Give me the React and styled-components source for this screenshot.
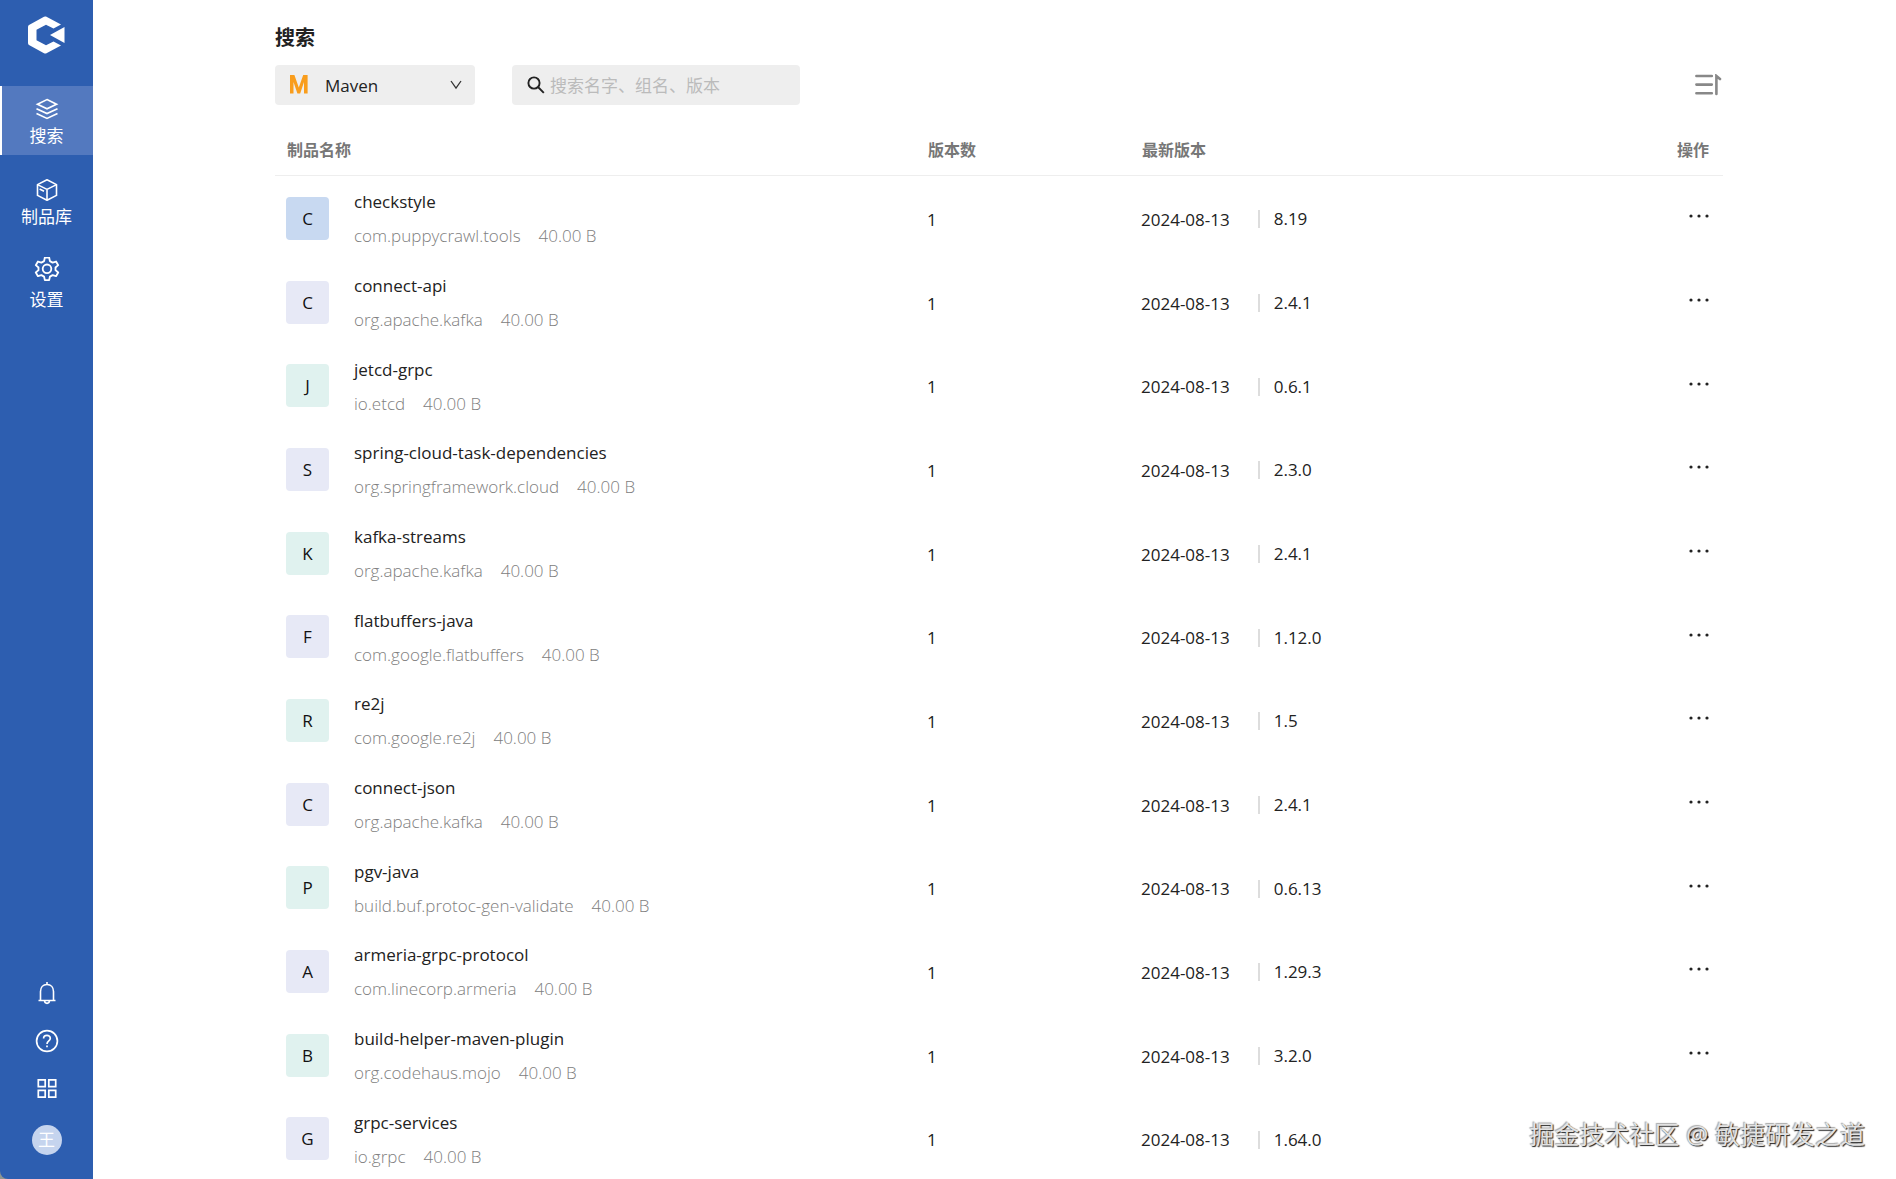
import React from 'react';
import styled, { createGlobalStyle } from 'styled-components';

const GlobalStyle = createGlobalStyle`
  * {
    box-sizing: border-box;
  }

  body {
    margin: 0;
    background: #fff;
    color: #222;
    font-family: 'Open Sans', 'Noto Sans CJK SC', sans-serif;
    font-size: 17px;
    font-weight: 400;
  }

  button,
  input,
  select {
    font: inherit;
    color: inherit;
  }
`;

const packages = [
  { name: 'checkstyle', group: 'com.puppycrawl.tools', version: '8.19', tone: '#c8d9f1' },
  { name: 'connect-api', group: 'org.apache.kafka', version: '2.4.1', tone: '#e7e9f6' },
  { name: 'jetcd-grpc', group: 'io.etcd', version: '0.6.1', tone: '#e0f2ef' },
  { name: 'spring-cloud-task-dependencies', group: 'org.springframework.cloud', version: '2.3.0', tone: '#e7e9f6' },
  { name: 'kafka-streams', group: 'org.apache.kafka', version: '2.4.1', tone: '#e0f2ef' },
  { name: 'flatbuffers-java', group: 'com.google.flatbuffers', version: '1.12.0', tone: '#e7e9f6' },
  { name: 're2j', group: 'com.google.re2j', version: '1.5', tone: '#e0f2ef' },
  { name: 'connect-json', group: 'org.apache.kafka', version: '2.4.1', tone: '#e7e9f6' },
  { name: 'pgv-java', group: 'build.buf.protoc-gen-validate', version: '0.6.13', tone: '#e0f2ef' },
  { name: 'armeria-grpc-protocol', group: 'com.linecorp.armeria', version: '1.29.3', tone: '#e7e9f6' },
  { name: 'build-helper-maven-plugin', group: 'org.codehaus.mojo', version: '3.2.0', tone: '#e0f2ef' },
  { name: 'grpc-services', group: 'io.grpc', version: '1.64.0', tone: '#e7e9f6' },
];

const Logo = () => (
  <svg width="38" height="38" viewBox="0 0 38 38" fill="#fff">
    <path d="M19 0.5 L34 8.5 L26.5 12.5 L19 8.8 L9.5 13.8 V24.2 L19 29.2 L26.5 25.5 L34 29.5 L19 37.5 Q18 37.8 17 37.2 L2 29 Q1 28.4 1 27 V11 Q1 9.6 2 9 L17 0.8 Q18 0.2 19 0.5 Z" />
    <path d="M37.5 11 V27 L23 19 Z" />
  </svg>
);

const LayersIcon = () => (
  <svg width="24" height="24" viewBox="0 0 24 24" fill="none" stroke="#fff" strokeWidth="1.7">
    <path d="M12 2.6 L21.5 7.2 L12 11.8 L2.5 7.2 Z" />
    <path d="M1.5 11.8 L12 16.6 L22.5 11.8" />
    <path d="M1.5 16.6 L12 21.4 L22.5 16.6" />
  </svg>
);

const BoxIcon = () => (
  <svg width="24" height="24" viewBox="0 0 24 24" fill="none" stroke="#fff" strokeWidth="1.6" strokeLinejoin="round">
    <path d="M12 1.8 L21.5 6.6 V17.4 L12 22.2 L2.5 17.4 V6.6 Z" />
    <path d="M2.5 6.6 L12 11.4 L21.5 6.6 M12 11.4 V22.2 M4.6 11 L9 13.2" />
  </svg>
);

const GearIcon = () => (
  <svg width="26" height="28" viewBox="0 1 24 26" fill="none" stroke="#fff" strokeWidth="1.7" strokeLinejoin="round">
    <circle cx="12" cy="12" r="4" />
    <path d="M10 1.5 H14 L14.7 4.8 L17.2 6.2 L20.4 5.2 L22.4 8.6 L19.9 10.8 V13.2 L22.4 15.4 L20.4 18.8 L17.2 17.8 L14.7 19.2 L14 22.5 H10 L9.3 19.2 L6.8 17.8 L3.6 18.8 L1.6 15.4 L4.1 13.2 V10.8 L1.6 8.6 L3.6 5.2 L6.8 6.2 L9.3 4.8 Z" />
  </svg>
);

const BellIcon = () => (
  <svg width="24" height="24" viewBox="0 0 24 24" fill="none" stroke="#fff" strokeWidth="1.6">
    <path d="M3.5 19.5 H20.5 M5.5 19.5 V10.5 C5.5 6.5 8 3.5 12 3.5 C16 3.5 18.5 6.5 18.5 10.5 V19.5 M12 1 V3.5 M9.5 19.8 C9.8 23.2 14.2 23.2 14.5 19.8" />
  </svg>
);

const HelpIcon = () => (
  <svg width="24" height="24" viewBox="0 0 24 24" fill="none" stroke="#fff" strokeWidth="1.7">
    <circle cx="12" cy="12" r="10.4" />
    <path d="M8.6 9.6 C8.6 5.2 15.4 5.4 15.3 9.4 C15.2 11.8 12 11.9 12 14.9 M12 16.6 V18.3" />
  </svg>
);

const GridIcon = () => (
  <svg width="24" height="24" viewBox="0 0 24 24" fill="none" stroke="#fff" strokeWidth="1.7">
    <path d="M3.3 2.8 H10.2 V9.7 H3.3 Z M13.8 2.8 H20.7 V9.7 H13.8 Z M3.3 13.3 H10.2 V20.2 H3.3 Z M13.8 13.3 H20.7 V20.2 H13.8 Z" />
  </svg>
);

const MavenIcon = () => (
  <svg width="19" height="20" viewBox="0 0 19 20" fill="#f99d1c">
    <path d="M1 18.5 V0 H5.4 L9.8 12.5 L14.2 0 H18.6 V18.5 H15 V7 L11.2 18.5 H8.4 L4.5 7 V18.5 Z" />
  </svg>
);

const ChevronIcon = () => (
  <svg width="12" height="10" viewBox="0 0 12 10" fill="none" stroke="#333" strokeWidth="1.3">
    <path d="M1 1 L6 8.2 L11 1" />
  </svg>
);

const SearchIcon = () => (
  <svg width="18" height="18" viewBox="0 0 18 18" fill="none" stroke="#222" strokeWidth="1.9">
    <circle cx="7" cy="7" r="5.6" />
    <path d="M11 11 L16.8 16.8" />
  </svg>
);

const SortIcon = () => (
  <svg width="28" height="22" viewBox="0 0 28 22" fill="none" stroke="#888" strokeWidth="2.6" strokeLinecap="round">
    <path d="M1.4 2 H16.8 M1.4 10.6 H16.8 M1.4 19.2 H16.8" />
    <path d="M21.4 20 V2 L25 5" />
  </svg>
);

const DotsIcon = () => (
  <svg width="20" height="4" viewBox="0 0 20 4" fill="#222">
    <circle cx="2" cy="2" r="1.6" />
    <circle cx="10" cy="2" r="1.6" />
    <circle cx="18" cy="2" r="1.6" />
  </svg>
);

const App = () => {
  return (
    <Page>
      <GlobalStyle />
      <Sidebar>
        <LogoLink href="#" aria-label="首页"><Logo /></LogoLink>
        <Nav>
          <NavItem href="#search" $active><LayersIcon />搜索</NavItem>
          <NavItem href="#repository"><BoxIcon />制品库</NavItem>
          <NavItem href="#setting"><GearIcon />设置</NavItem>
        </Nav>
        <SideTools>
          <IconButton aria-label="消息"><BellIcon /></IconButton>
          <IconButton aria-label="帮助"><HelpIcon /></IconButton>
          <IconButton aria-label="应用"><GridIcon /></IconButton>
          <Avatar>王</Avatar>
        </SideTools>
      </Sidebar>
      <Main>
        <Title>搜索</Title>
        <Toolbar>
          <SelectBox>
            <MavenIcon />
            <select aria-label="制品类型" defaultValue="Maven">
              <option>Maven</option>
              <option>Npm</option>
              <option>Docker</option>
            </select>
            <ChevronIcon />
          </SelectBox>
          <SearchBox>
            <SearchIcon />
            <input type="text" aria-label="搜索" placeholder="搜索名字、组名、版本" />
          </SearchBox>
          <SortButton aria-label="排序"><SortIcon /></SortButton>
        </Toolbar>
        <Table>
          <thead>
            <tr>
              <HeadCell>制品名称</HeadCell>
              <HeadCell $width="214px">版本数</HeadCell>
              <HeadCell $width="453px">最新版本</HeadCell>
              <HeadCell $width="140px" $right>操作</HeadCell>
            </tr>
          </thead>
          <tbody>
            {packages.map((item) => (
              <Row key={item.name}>
                <Cell>
                  <Package>
                    <Tile $tone={item.tone}>{item.name[0].toUpperCase()}</Tile>
                    <div>
                      <Name>{item.name}</Name>
                      <Meta><span>{item.group}</span><span>40.00 B</span></Meta>
                    </div>
                  </Package>
                </Cell>
                <Cell>1</Cell>
                <Cell>
                  <Latest><span>2024-08-13</span><Version>{item.version}</Version></Latest>
                </Cell>
                <Cell>
                  <MoreButton aria-label="更多操作"><DotsIcon /></MoreButton>
                </Cell>
              </Row>
            ))}
          </tbody>
        </Table>
      </Main>
      <Watermark>掘金技术社区 @ 敏捷研发之道</Watermark>
    </Page>
  );
};

const Page = styled.div`
  position: relative;
  display: flex;
  height: 100vh;
  overflow: hidden;
  background: #8f9691;
`;

const Sidebar = styled.aside`
  display: flex;
  flex-direction: column;
  flex: 0 0 93px;
  background: #2d5eb0;
  color: #fff;
  border-bottom-left-radius: 8px;
`;

const LogoLink = styled.a`
  display: flex;
  justify-content: center;
  padding: 16px 2px 32px 0;
`;

const Nav = styled.nav`
  display: flex;
  flex-direction: column;
  gap: 12px;
`;

const NavItem = styled.a`
  display: flex;
  flex-direction: column;
  align-items: center;
  justify-content: center;
  gap: 3px;
  height: 69px;
  padding: 3px 2px 0 0;
  border-left: 2px solid ${(props) => (props.$active ? '#fff' : 'transparent')};
  background: ${(props) => (props.$active ? '#5379bf' : 'transparent')};
  color: #fff;
  line-height: 24px;
  text-decoration: none;
`;

const SideTools = styled.div`
  display: flex;
  flex-direction: column;
  align-items: center;
  gap: 24px;
  margin-top: auto;
  padding-bottom: 24px;
`;

const IconButton = styled.button`
  display: flex;
  padding: 0;
  border: none;
  background: none;
  cursor: pointer;
`;

const Avatar = styled.div`
  width: 30px;
  height: 30px;
  border-radius: 50%;
  background: #c5d4ee;
  line-height: 30px;
  text-align: center;
`;

const Main = styled.main`
  flex: 1;
  min-width: 0;
  padding: 24px 173px 0 182px;
  background: #fff;
`;

const Title = styled.h1`
  margin: 0 0 13px;
  font-size: 20px;
  font-weight: 700;
  line-height: 28px;
`;

const Toolbar = styled.div`
  display: flex;
  align-items: center;
`;

const SelectBox = styled.div`
  display: flex;
  align-items: center;
  width: 200px;
  height: 40px;
  padding: 0 13px 0 14px;
  border-radius: 4px;
  background: #eee;

  select {
    flex: 1;
    min-width: 0;
    height: 40px;
    padding: 0 0 0 17px;
    border: none;
    outline: none;
    appearance: none;
    background: none;
  }
`;

const SearchBox = styled.div`
  display: flex;
  align-items: center;
  gap: 5px;
  width: 288px;
  height: 40px;
  margin-left: 37px;
  padding: 0 15px;
  border-radius: 4px;
  background: #eee;

  input {
    flex: 1;
    min-width: 0;
    padding: 0;
    border: none;
    outline: none;
    background: none;
  }

  input::placeholder {
    color: #bbb;
    opacity: 1;
  }
`;

const SortButton = styled(IconButton)`
  margin-left: auto;
`;

const Table = styled.table`
  width: 100%;
  margin-top: 19px;
  border-collapse: collapse;
  table-layout: fixed;
`;

const HeadCell = styled.th`
  width: ${(props) => props.$width || 'auto'};
  height: 51px;
  padding: 0 14px 0 12px;
  border-bottom: 1px solid #eee;
  color: #777;
  font-size: 16px;
  font-weight: 700;
  text-align: ${(props) => (props.$right ? 'right' : 'left')};
`;

const Row = styled.tr`
  height: 84px;

  &:nth-child(3n) {
    height: 83px;
  }
`;

const Cell = styled.td`
  padding: 4px 14px 0 11px;
`;

const Package = styled.div`
  display: flex;
  align-items: center;
  gap: 25px;
`;

const Tile = styled.div`
  width: 43px;
  height: 43px;
  margin-bottom: 2px;
  border-radius: 4px;
  background: ${(props) => props.$tone};
  color: #111;
  line-height: 43px;
  text-align: center;
`;

const Name = styled.div`
  line-height: 34px;
`;

const Meta = styled.div`
  display: flex;
  gap: 18px;
  color: #808080;
  font-weight: 300;
  line-height: 34px;
`;

const Latest = styled.div`
  display: flex;
  align-items: center;
`;

const Version = styled.span`
  margin-left: 28px;
  padding-left: 14px;
  border-left: 2px solid #ddd;
  line-height: 18px;
`;

const MoreButton = styled(IconButton)`
  margin-left: auto;
  padding-bottom: 6px;
`;

const Watermark = styled.div`
  position: absolute;
  right: 31px;
  bottom: 27px;
  color: #e2e2e2;
  font-size: 25px;
  line-height: 36px;
  text-shadow: 1px 1px 1px #222, -1px -1px 1px #aaa;
`;

export default App;
